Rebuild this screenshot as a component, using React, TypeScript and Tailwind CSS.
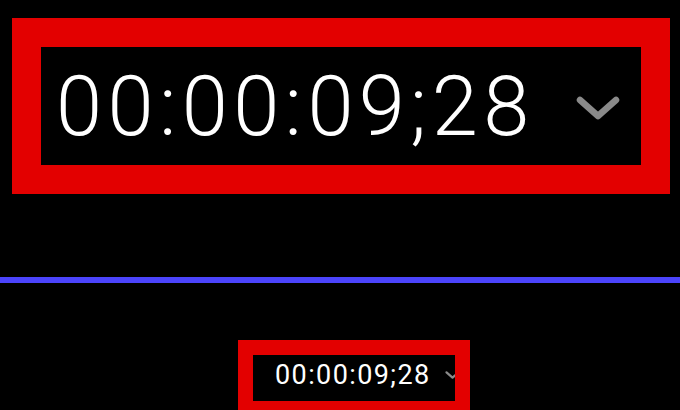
function Chevron({ className }: { className: string }) {
  return (
    <svg viewBox="0 0 44 24" className={className} fill="none">
      <path d="M4 4 L22 20 L40 4" stroke="#8a8a8a" strokeWidth="6.5" strokeLinecap="round" strokeLinejoin="round" />
    </svg>
  )
}

function Timecode({ big }: { big: boolean }) {
  if (big) {
    return (
      <div className="shrink-0 ml-[12px] mt-[18px] w-[658px] h-[176px] border-[29px] border-[#e30000] bg-black">
        <div className="h-full flex items-center pl-[15px] overflow-hidden">
          <span className="text-[83px] font-light leading-none tracking-[5.4px] text-white whitespace-nowrap font-['Roboto','Liberation_Sans',sans-serif]">
            00:00:09;28
          </span>
          <Chevron className="ml-[41px] mt-[4px] w-[44px] h-[24px] shrink-0" />
        </div>
      </div>
    )
  }
  return (
    <div className="shrink-0 ml-[238px] w-[232px] h-[76px] border-[15px] border-[#e30000] bg-black">
      <div className="h-full flex items-center pl-[22px] pb-[6px] overflow-hidden">
        <span className="text-[27px] font-normal leading-none tracking-[1.4px] text-white whitespace-nowrap font-['Roboto','Liberation_Sans',sans-serif]">
          00:00:09;28
        </span>
        <Chevron className="ml-[14px] w-[15px] h-[8px] shrink-0" />
      </div>
    </div>
  )
}

export default function App() {
  return (
    <div className="w-[680px] h-[410px] bg-black overflow-hidden flex flex-col">
      <Timecode big />
      <div className="shrink-0 mt-[83px] h-[6px] w-full bg-[#4b44fc]" />
      <div className="shrink-0 mt-[57px]">
        <Timecode big={false} />
      </div>
    </div>
  )
}
